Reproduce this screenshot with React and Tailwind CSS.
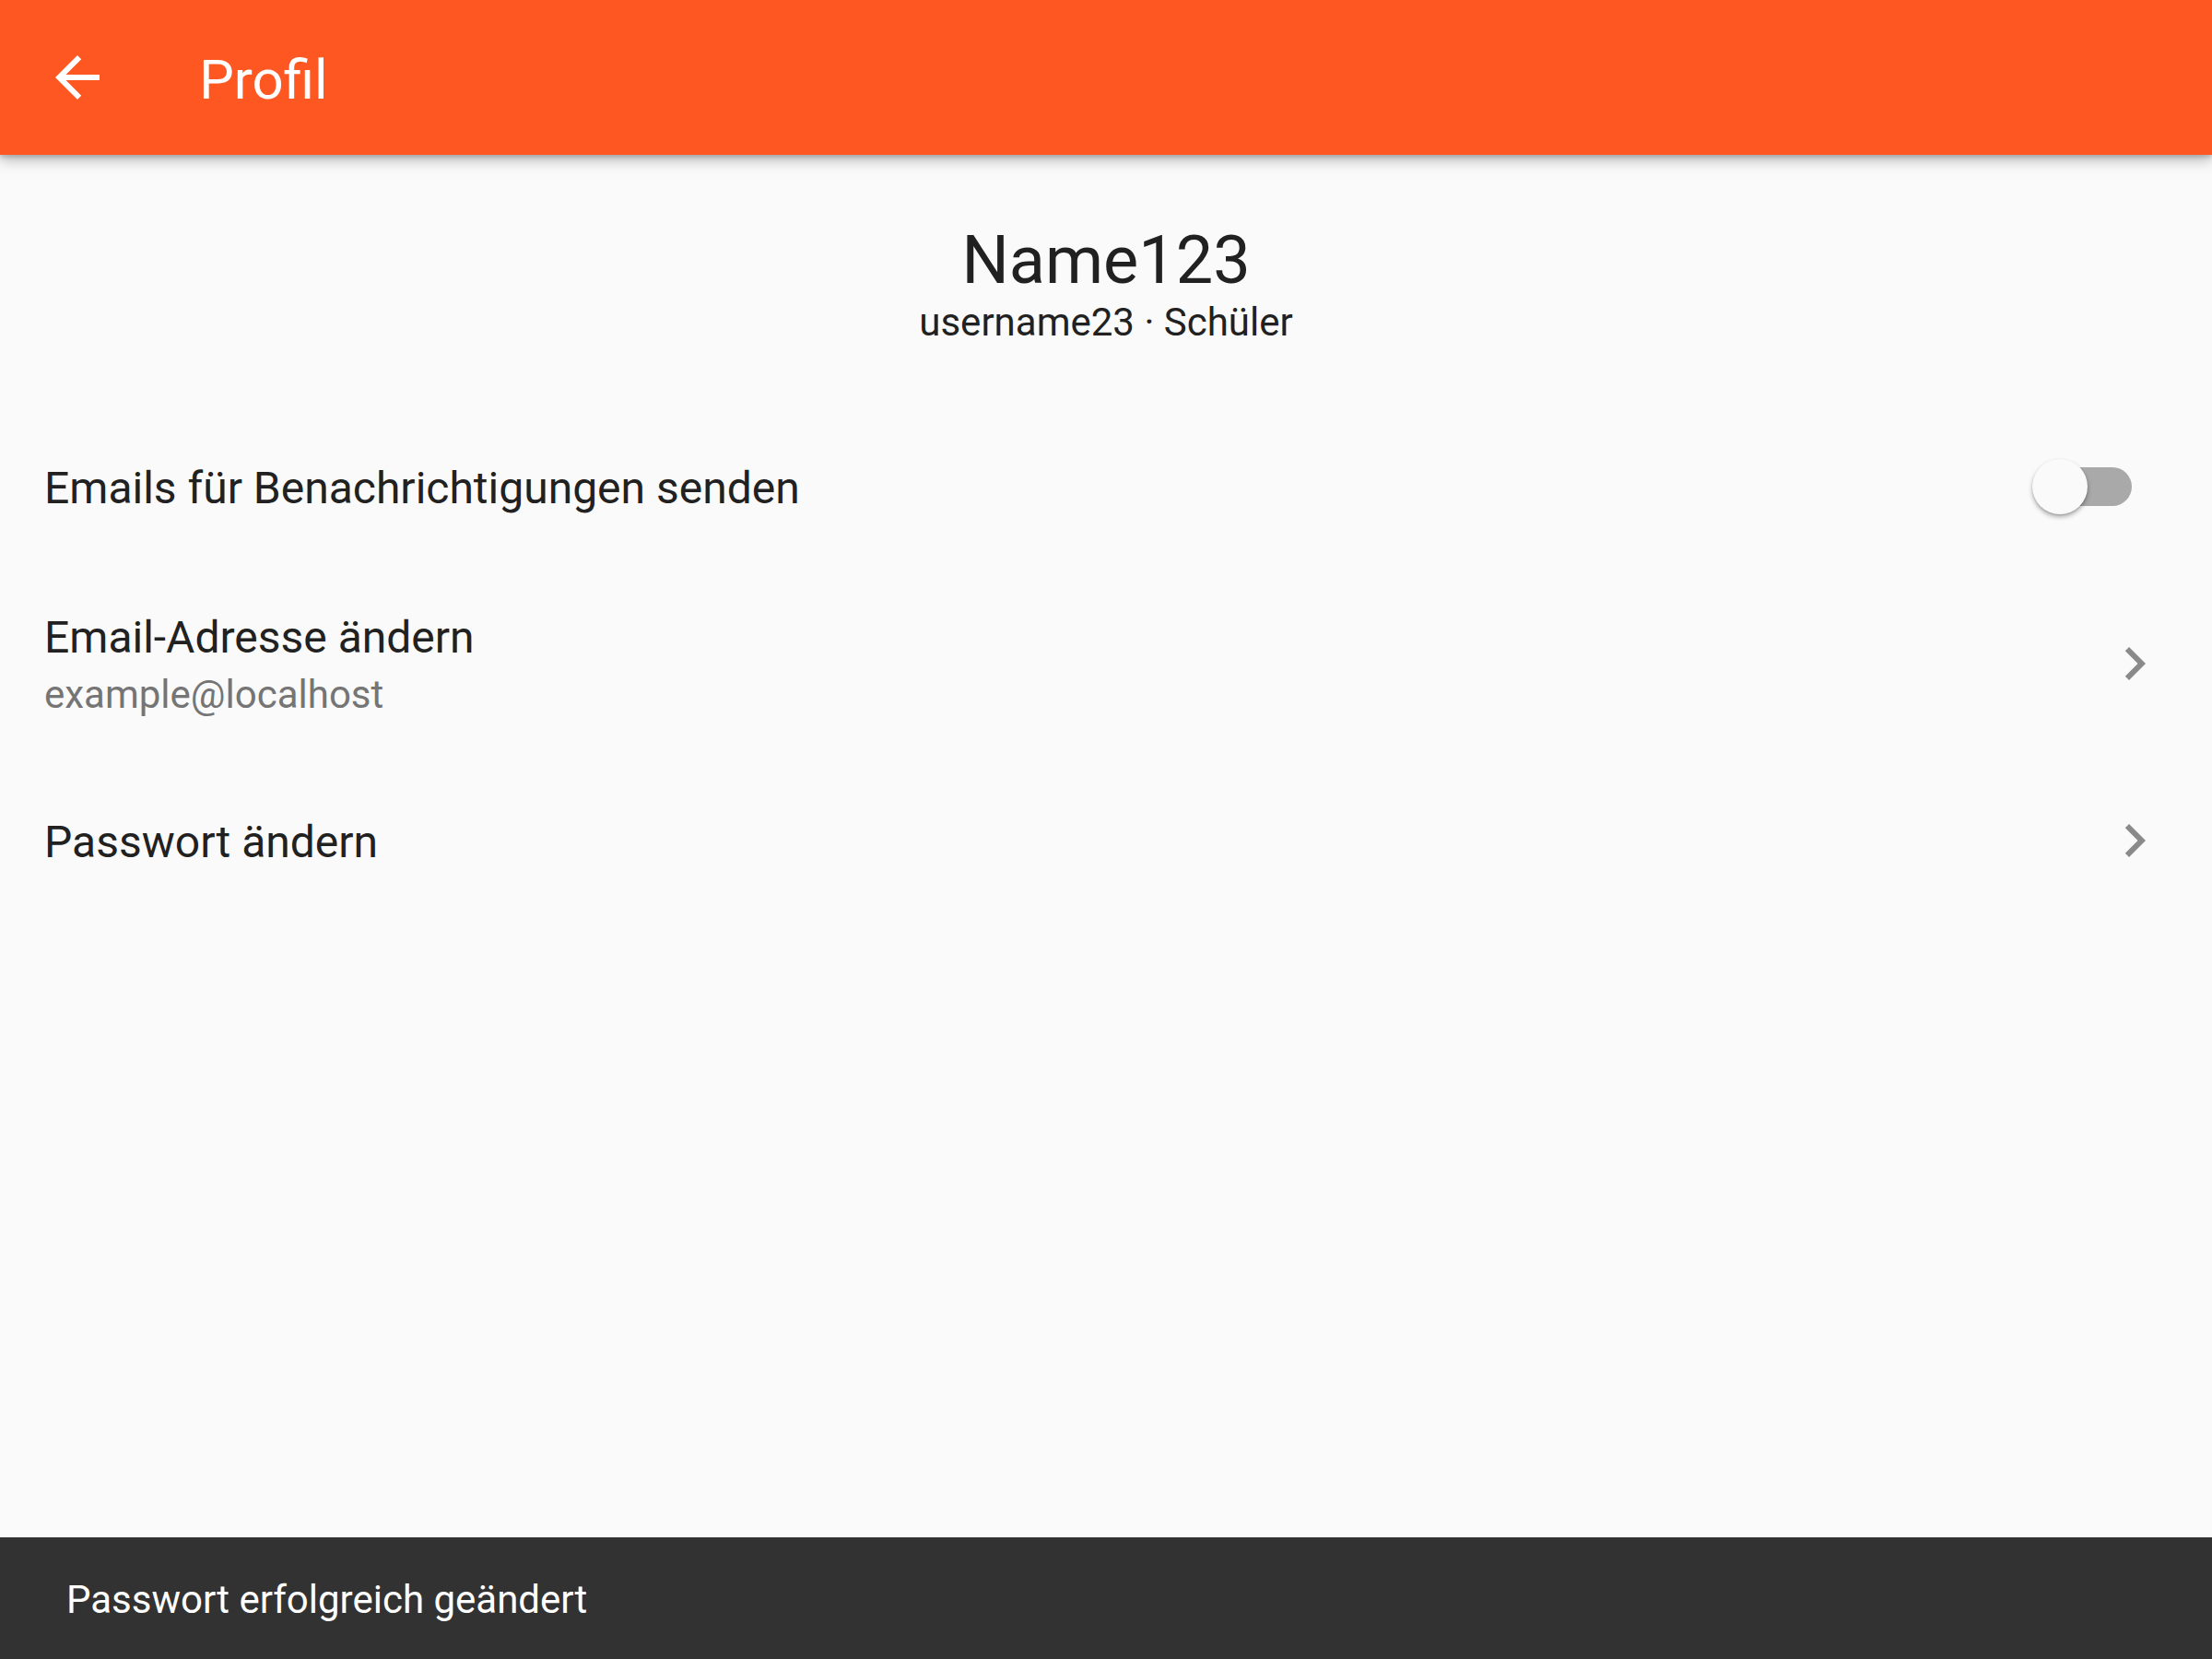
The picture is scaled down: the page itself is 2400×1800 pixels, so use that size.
import { useState } from 'react';

const ArrowBack = () => (
  <svg width="72" height="72" viewBox="0 0 24 24" fill="#ffffff">
    <path d="M20 11H7.83l5.59-5.59L12 4l-8 8 8 8 1.41-1.41L7.83 13H20v-2z" />
  </svg>
);

const ChevronRight = () => (
  <svg width="72" height="72" viewBox="0 0 24 24" fill="#8a8a8a">
    <path d="M10 6L8.59 7.41 13.17 12l-4.58 4.59L10 18l6-6z" />
  </svg>
);

const Toggle = ({ on, onChange }) => (
  <button type="button" onClick={() => onChange(!on)} className="relative w-[108px] h-[60px] mr-[39px] shrink-0">
    <span className="absolute right-0 top-[9px] w-[102px] h-[42px] rounded-full bg-[#a9a9a9]" />
    <span className="absolute left-0 top-0 w-[60px] h-[60px] rounded-full bg-[#fafafa] shadow-[0_3px_5px_rgba(0,0,0,0.3),0_1px_2px_rgba(0,0,0,0.15)]" />
  </button>
);

const App = () => {
  const [notify, setNotify] = useState(false);

  return (
    <div className="h-[1800px] flex flex-col bg-[#fafafa] font-['Roboto',sans-serif] text-[#212121]">
      <header className="relative z-10 h-[168px] shrink-0 flex items-center bg-[#ff5722] pl-[48px] shadow-[0_6px_14px_rgba(0,0,0,0.26),0_3px_4px_rgba(0,0,0,0.14)]">
        <ArrowBack />
        <span className="ml-[96px] mt-[6px] text-[60px] leading-[60px] text-white">Profil</span>
      </header>

      <main className="flex-1">
        <div className="pt-[79px] flex flex-col items-center">
          <h1 className="text-[72px] leading-none font-normal">Name123</h1>
          <p className="mt-[10px] text-[42px] leading-none">username23 · Schüler</p>
        </div>

        <div className="mt-[73px]">
          <div className="h-[168px] flex items-center justify-between pl-[48px] pr-[48px]">
            <span className="mt-[3px] text-[48px] leading-none">Emails für Benachrichtigungen senden</span>
            <Toggle on={notify} onChange={setNotify} />
          </div>

          <div className="h-[216px] flex items-center justify-between pl-[48px] pr-[48px]">
            <div className="mt-[3px] flex flex-col">
              <span className="text-[48px] leading-[48px]">Email-Adresse ändern</span>
              <span className="mt-[17px] text-[42px] leading-[42px] text-[#757575]">example@localhost</span>
            </div>
            <ChevronRight />
          </div>

          <div className="h-[168px] flex items-center justify-between pl-[48px] pr-[48px]">
            <span className="mt-[3px] text-[48px] leading-none">Passwort ändern</span>
            <ChevronRight />
          </div>
        </div>
      </main>

      <div className="h-[132px] shrink-0 flex items-center bg-[#323232] px-[72px]">
        <span className="mt-[3px] text-[42px] leading-none text-white">Passwort erfolgreich geändert</span>
      </div>
    </div>
  );
};

export default App;
